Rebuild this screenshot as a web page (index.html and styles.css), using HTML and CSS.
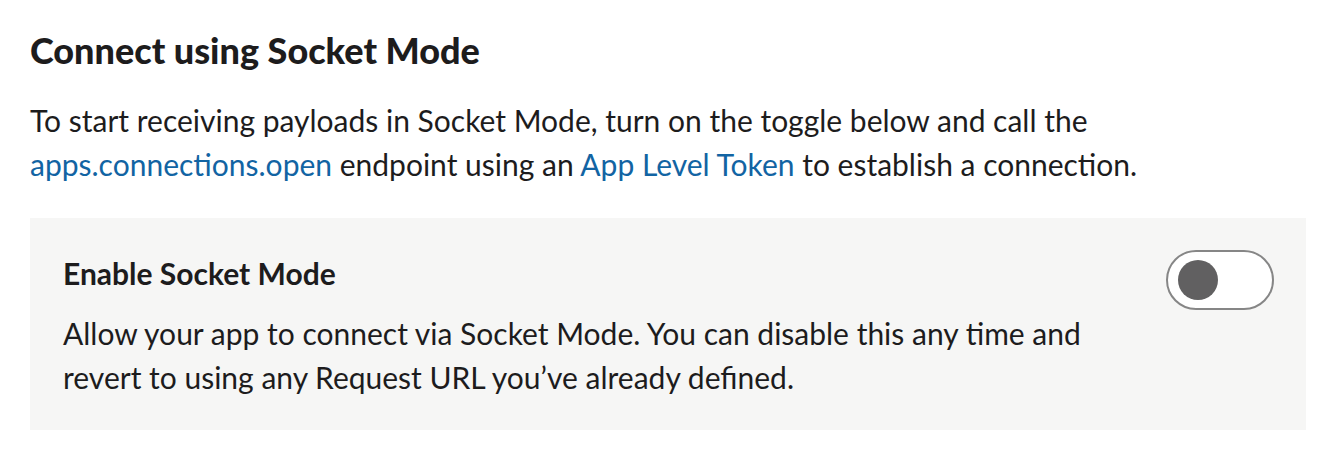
FILE: index.html
```html
<!DOCTYPE html>
<html lang="en">
<head>
    <meta charset="UTF-8">
    <meta name="viewport" content="width=device-width, initial-scale=1.0">
    <title>Socket Mode</title>
    <link rel="stylesheet" href="styles.css">
</head>
<body>
    <section class="socket">
        <h1 class="socket-title">Connect using Socket Mode</h1>
        <p class="socket-intro">
            To start receiving payloads in Socket Mode, turn on the toggle below and call the
            <a href="#">apps.connections.open</a> endpoint using an <a href="#">App Level Token</a> to establish a connection.
        </p>

        <!-- Toggle panel -->
        <div class="panel">
            <div class="panel-text">
                <h2 class="panel-title">Enable Socket Mode</h2>
                <p class="panel-desc">Allow your app to connect via Socket Mode. You can disable this any time and revert to using any Request URL you’ve already defined.</p>
            </div>
            <button class="toggle" aria-pressed="false"><span class="knob"></span></button>
        </div>
    </section>
</body>
</html>
```

FILE: styles.css
```css
body {
    font-family: Lato, "Open Sans", sans-serif;
    color: #1d1c1d;
    background-color: #ffffff;
    margin: 0;
    padding: 0;
}

.socket {
    padding: 0 22px 0 30px;
}

.socket-title {
    font-size: 36px;
    font-weight: 900;
    line-height: 44px;
    margin: 28px 0 0;
}

.socket-intro {
    font-size: 30px;
    line-height: 44px;
    margin: 26px 0 32px;
}

.socket-intro a {
    color: #1264a3;
    text-decoration: none;
}

.panel {
    background-color: #f6f6f5;
    display: flex;
    justify-content: space-between;
    align-items: flex-start;
    padding: 33px 32px 31px 33px;
}

.panel-text {
    max-width: 1050px;
}

.panel-title {
    font-size: 30px;
    font-weight: 700;
    line-height: 44px;
    margin: 0 0 16px;
}

.panel-desc {
    font-size: 30px;
    line-height: 44px;
    margin: 0;
}

.toggle {
    width: 108px;
    height: 60px;
    margin: -1px 0 0;
    padding: 0 0 0 10px;
    border: 2px solid #868686;
    border-radius: 30px;
    background-color: #ffffff;
    display: flex;
    align-items: center;
    cursor: pointer;
}

.knob {
    width: 40px;
    height: 40px;
    border-radius: 50%;
    background-color: #616061;
}
```
